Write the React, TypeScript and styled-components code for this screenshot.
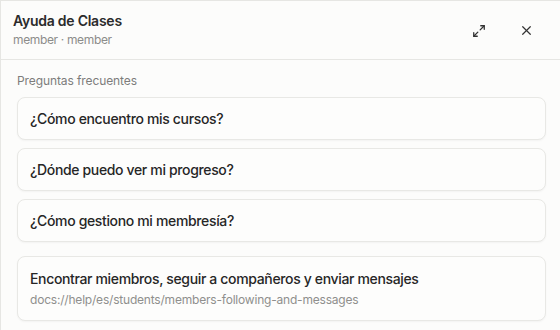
import React from "react";
import styled, { createGlobalStyle } from "styled-components";

const Global = createGlobalStyle`
  html, body { margin: 0; padding: 0; background: #fcfcfb; }
  body { font-family: Inter, "Noto Sans", sans-serif; -webkit-font-smoothing: antialiased; }
`;

const Panel = styled.div`
  width: 560px;
  height: 330px;
  box-sizing: border-box;
  border-left: 1px solid #e6e6e3;
  border-top: 1px solid #e6e6e3;
  background: #fcfcfb;
  display: flex;
  flex-direction: column;
  overflow: hidden;
`;

const Header = styled.div`
  height: 59px;
  box-sizing: border-box;
  border-bottom: 1px solid #e6e6e3;
  display: flex;
  align-items: center;
  justify-content: space-between;
  padding: 0 24px 0 12px;
`;

const TitleBlock = styled.div`
  display: flex;
  flex-direction: column;
  gap: 3px;
  margin-top: -2px;
`;

const Title = styled.div`
  font-size: 14px;
  font-weight: 600;
  color: #2b2b2b;
  letter-spacing: -0.25px;
`;

const Subtitle = styled.div`
  font-size: 12px;
  color: #8c8c8a;
  letter-spacing: -0.35px;
`;

const Actions = styled.div`
  display: flex;
  align-items: center;
  gap: 27px;
  margin-top: 1px;
`;

const IconButton = styled.button`
  border: 0;
  background: transparent;
  padding: 0;
  width: 20px;
  height: 20px;
  display: flex;
  align-items: center;
  justify-content: center;
  color: #333333;
  cursor: pointer;
`;

const Body = styled.div`
  padding: 13px 14px 0 16px;
  display: flex;
  flex-direction: column;
`;

const SectionLabel = styled.div`
  font-size: 12px;
  color: #7d7d7b;
  margin-bottom: 9px;
  letter-spacing: -0.1px;
`;

const List = styled.div`
  display: flex;
  flex-direction: column;
  gap: 8px;
`;

const Card = styled.div<{ $spaced?: boolean }>`
  box-sizing: border-box;
  border: 1px solid #e8e8e5;
  border-radius: 8px;
  background: #fdfdfc;
  box-shadow: 0 1px 2px rgba(0, 0, 0, 0.04);
  padding: ${(p) => (p.$spaced ? "13px 12px 13px" : "12px 12px")};
  margin-top: ${(p) => (p.$spaced ? "6px" : "0")};
  display: flex;
  flex-direction: column;
  gap: 5px;
`;

const CardTitle = styled.div`
  font-size: 14px;
  font-weight: 500;
  color: #262626;
  line-height: 17px;
  letter-spacing: -0.35px;
`;

const CardPath = styled.div`
  font-size: 12px;
  color: #8f8f8d;
  line-height: 15px;
  letter-spacing: -0.2px;
`;

const faqs = [
  "¿Cómo encuentro mis cursos?",
  "¿Dónde puedo ver mi progreso?",
  "¿Cómo gestiono mi membresía?",
];

export default function App() {
  return (
    <>
      <Global />
      <Panel>
        <Header>
          <TitleBlock>
            <Title>Ayuda de Clases</Title>
            <Subtitle>member · member</Subtitle>
          </TitleBlock>
          <Actions>
            <IconButton aria-label="Expandir">
              <svg width="14" height="14" viewBox="0 0 24 24" fill="none" stroke="currentColor" strokeWidth="2.2" strokeLinecap="round" strokeLinejoin="round">
                <polyline points="15 3 21 3 21 9" />
                <polyline points="9 21 3 21 3 15" />
                <line x1="21" y1="3" x2="14" y2="10" />
                <line x1="3" y1="21" x2="10" y2="14" />
              </svg>
            </IconButton>
            <IconButton aria-label="Cerrar">
              <svg width="13" height="13" viewBox="0 0 24 24" fill="none" stroke="currentColor" strokeWidth="2.2" strokeLinecap="round">
                <line x1="5" y1="5" x2="19" y2="19" />
                <line x1="19" y1="5" x2="5" y2="19" />
              </svg>
            </IconButton>
          </Actions>
        </Header>
        <Body>
          <SectionLabel>Preguntas frecuentes</SectionLabel>
          <List>
            {faqs.map((q) => (
              <Card key={q}>
                <CardTitle>{q}</CardTitle>
              </Card>
            ))}
            <Card $spaced>
              <CardTitle>Encontrar miembros, seguir a compañeros y enviar mensajes</CardTitle>
              <CardPath>docs://help/es/students/members-following-and-messages</CardPath>
            </Card>
          </List>
        </Body>
      </Panel>
    </>
  );
}
